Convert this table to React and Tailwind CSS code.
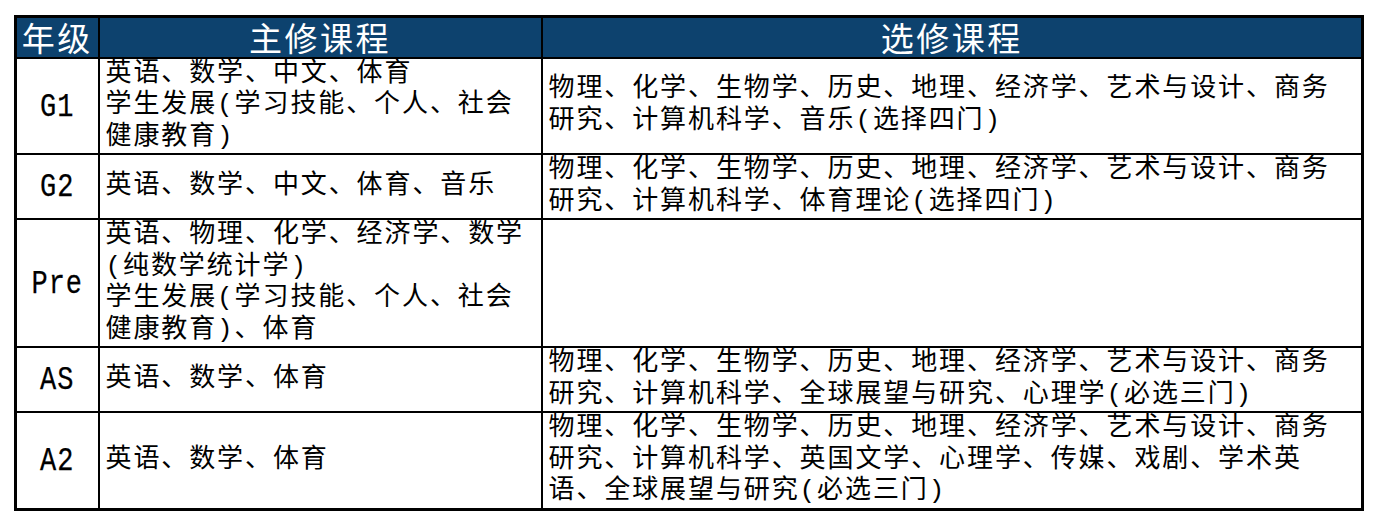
import React from "react";

const rows = [
  {
    grade: "G1",
    h: "h-[96px]",
    main: ["英语、数学、中文、体育", "学生发展(学习技能、个人、社会", "健康教育)"],
    elective: ["物理、化学、生物学、历史、地理、经济学、艺术与设计、商务", "研究、计算机科学、音乐(选择四门)"],
  },
  {
    grade: "G2",
    h: "h-[63px]",
    main: ["英语、数学、中文、体育、音乐"],
    elective: ["物理、化学、生物学、历史、地理、经济学、艺术与设计、商务", "研究、计算机科学、体育理论(选择四门)"],
  },
  {
    grade: "Pre",
    h: "h-[128px]",
    main: ["英语、物理、化学、经济学、数学", "(纯数学统计学)", "学生发展(学习技能、个人、社会", "健康教育)、体育"],
    elective: [],
  },
  {
    grade: "AS",
    h: "h-[65px]",
    main: ["英语、数学、体育"],
    elective: ["物理、化学、生物学、历史、地理、经济学、艺术与设计、商务", "研究、计算机科学、全球展望与研究、心理学(必选三门)"],
  },
  {
    grade: "A2",
    h: "h-[95px]",
    main: ["英语、数学、体育"],
    elective: [
      "物理、化学、生物学、历史、地理、经济学、艺术与设计、商务",
      "研究、计算机科学、英国文学、心理学、传媒、戏剧、学术英",
      "语、全球展望与研究(必选三门)",
    ],
  },
];

function Lines({ lines }) {
  return lines.map((line, i) => (
    <div key={i} className="whitespace-nowrap">
      {line}
    </div>
  ));
}

export default function App() {
  return (
    <div className="bg-white h-[520px] pl-[14px] pt-[15px] font-['Liberation_Mono','Noto_Sans_CJK_SC',monospace] text-black">
      <table className="table-fixed border-collapse w-[1347px] border-[3px] border-black">
        <colgroup>
          <col className="w-[83px]" />
          <col className="w-[443px]" />
          <col className="w-[821px]" />
        </colgroup>
        <thead>
          <tr className="h-[41px] bg-[#0d426e] text-white text-[33px] leading-[38px] tracking-[2.5px] font-['Noto_Sans_CJK_SC',sans-serif]">
            <th className="border-2 border-black font-normal p-0 text-center">年级</th>
            <th className="border-2 border-black font-normal p-0 text-center">主修课程</th>
            <th className="border-2 border-black font-normal p-0 text-center">选修课程</th>
          </tr>
        </thead>
        <tbody className="text-[26px] leading-[31.5px] tracking-[1.9px]">
          {rows.map((r) => (
            <tr key={r.grade} className={r.h}>
              <td className="border-2 border-black p-0 pt-[3px] text-center align-middle">
                <span className="inline-block scale-y-[1.25] text-[27px] tracking-[1px] [-webkit-text-stroke:0.2px_black]">
                  {r.grade}
                </span>
              </td>
              <td className="border-2 border-black py-0 pl-[6px] pr-0 align-middle">
                <Lines lines={r.main} />
              </td>
              <td className="border-2 border-black py-0 pl-[6px] pr-0 align-middle">
                <Lines lines={r.elective} />
              </td>
            </tr>
          ))}
        </tbody>
      </table>
    </div>
  );
}
